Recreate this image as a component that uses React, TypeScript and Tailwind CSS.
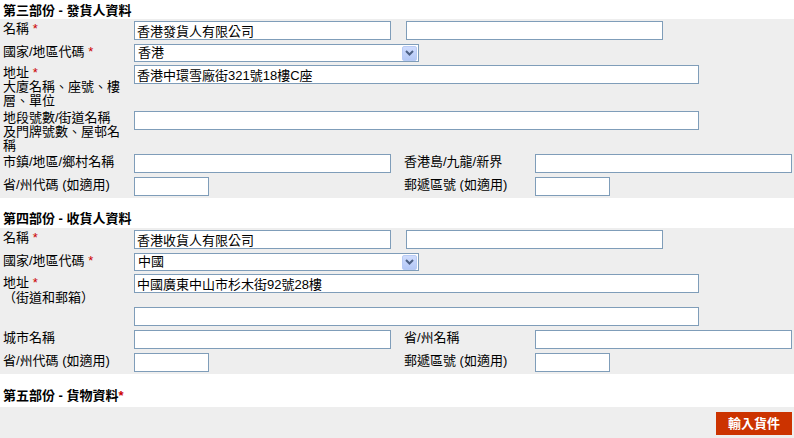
const font = "font-['Liberation_Sans','Noto_Sans_CJK_TC',sans-serif]"

function Req() {
  return <span className="text-[#cc0000]"> *</span>
}

function TextBox({ value = '', w }: { value?: string; w: string }) {
  return (
    <input
      readOnly
      value={value}
      className={`${w} h-[19px] shrink-0 border border-[#7f9db9] bg-white px-[2px] text-[13px] leading-[17px] text-black outline-none`}
    />
  )
}

function Select({ value }: { value: string }) {
  return (
    <div className="flex h-[18px] w-[285px] shrink-0 items-center justify-between border border-[#7f9db9] bg-white pl-[3px] pr-px">
      <span className="text-[13px] leading-[16px]">{value}</span>
      <span className="flex h-[15px] w-[15px] items-center justify-center rounded-[2px] border border-[#b8cbf4] bg-gradient-to-b from-[#cfdcfd] to-[#b4c8f6]">
        <svg width="9" height="6" viewBox="0 0 9 6">
          <path d="M1 1 L4.5 4.5 L8 1" stroke="#4d6185" strokeWidth="2" fill="none" />
        </svg>
      </span>
    </div>
  )
}

function Heading({ children, pt, pb }: { children: React.ReactNode; pt: string; pb: string }) {
  return <div className={`${pt} ${pb} pl-[3px] text-[13px] font-bold leading-[15px]`}>{children}</div>
}

function Label({ children, lh = 'leading-[15px]' }: { children: React.ReactNode; lh?: string }) {
  return <div className={`w-[134px] shrink-0 pl-[3px] pr-[4px] text-[13px] ${lh}`}>{children}</div>
}

export default function App() {
  return (
    <div className={`w-[794px] h-[438px] overflow-hidden bg-white text-black ${font}`}>
      <Heading pt="pt-[3px]" pb="pb-[1px]">第三部份 - 發貨人資料</Heading>
      <div className="bg-[#eeeeee] pt-[2px] pb-[2px]">
        <div className="flex h-[23px]">
          <Label>名稱<Req /></Label>
          <TextBox w="w-[257px]" value="香港發貨人有限公司" />
          <div className="w-[15px]" />
          <TextBox w="w-[257px]" />
        </div>
        <div className="flex h-[21px]">
          <Label>國家/地區代碼<Req /></Label>
          <Select value="香港" />
        </div>
        <div className="flex h-[46px]">
          <Label lh="leading-[14px]">
            <div className="leading-[15px]">地址<Req /></div>
            大廈名稱、座號、樓層、單位
          </Label>
          <TextBox w="w-[565px]" value="香港中環雪廠街321號18樓C座" />
        </div>
        <div className="flex h-[43px]">
          <Label lh="leading-[14px]">
            地段號數/街道名稱
            <br />
            及門牌號數、屋邨名稱
          </Label>
          <TextBox w="w-[565px]" />
        </div>
        <div className="flex h-[23px]">
          <Label>市鎮/地區/鄉村名稱</Label>
          <TextBox w="w-[257px]" />
          <div className="w-[10px]" />
          <Label>香港島/九龍/新界</Label>
          <TextBox w="w-[257px]" />
        </div>
        <div className="flex h-[19px]">
          <Label>省/州代碼 (如適用)</Label>
          <TextBox w="w-[75px]" />
          <div className="w-[192px]" />
          <Label>郵遞區號 (如適用)</Label>
          <TextBox w="w-[75px]" />
        </div>
      </div>

      <Heading pt="pt-[13px]" pb="pb-[2px]">第四部份 - 收貨人資料</Heading>
      <div className="bg-[#eeeeee] pt-[2px] pb-[2px]">
        <div className="flex h-[23px]">
          <Label>名稱<Req /></Label>
          <TextBox w="w-[257px]" value="香港收貨人有限公司" />
          <div className="w-[15px]" />
          <TextBox w="w-[257px]" />
        </div>
        <div className="flex h-[21px]">
          <Label>國家/地區代碼<Req /></Label>
          <Select value="中國" />
        </div>
        <div className="flex h-[33px]">
          <Label>
            <div className="pt-px">地址<Req /></div>
            （街道和郵箱）
          </Label>
          <TextBox w="w-[565px]" value="中國廣東中山市杉木街92號28樓" />
        </div>
        <div className="flex h-[23px]">
          <Label>{''}</Label>
          <TextBox w="w-[565px]" />
        </div>
        <div className="flex h-[23px]">
          <Label>城市名稱</Label>
          <TextBox w="w-[257px]" />
          <div className="w-[10px]" />
          <Label>省/州名稱</Label>
          <TextBox w="w-[257px]" />
        </div>
        <div className="flex h-[19px]">
          <Label>省/州代碼 (如適用)</Label>
          <TextBox w="w-[75px]" />
          <div className="w-[192px]" />
          <Label>郵遞區號 (如適用)</Label>
          <TextBox w="w-[75px]" />
        </div>
      </div>

      <Heading pt="pt-[14px]" pb="pb-[4px]">
        第五部份 - 貨物資料<span className="text-[#cc0000]">*</span>
      </Heading>
      <div className="flex h-[31px] justify-end bg-[#eeeeee] pt-[5px] pr-[2px]">
        <button className="h-[23px] w-[76px] bg-[#cc3300] text-[13px] font-bold text-white">輸入貨件</button>
      </div>
    </div>
  )
}
